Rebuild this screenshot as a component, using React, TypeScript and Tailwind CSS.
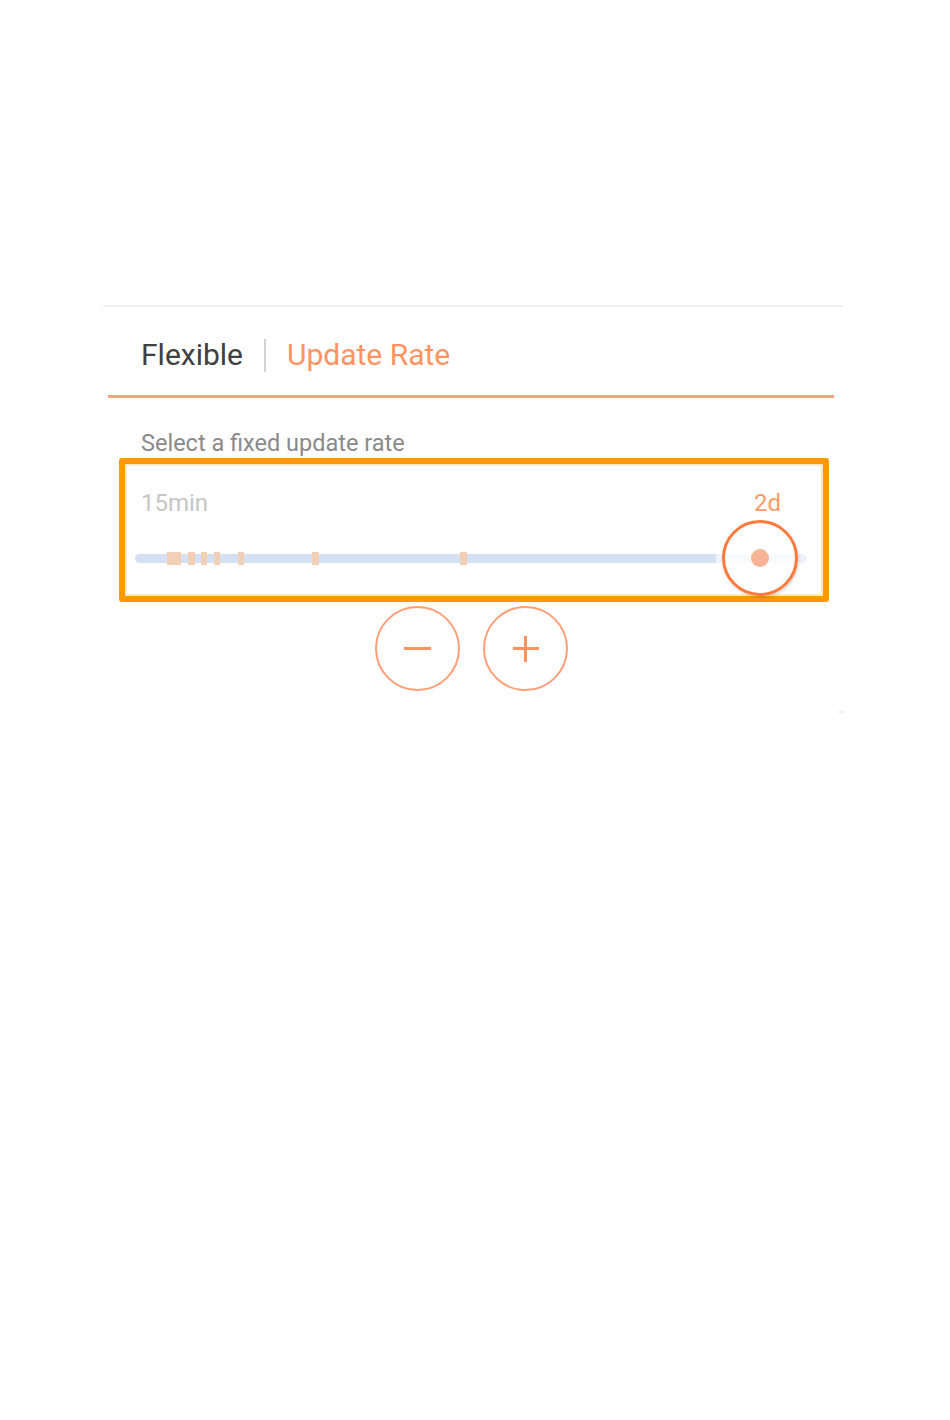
import React, { useState } from 'react'

const ticks = [
  { left: 32, width: 14 },
  { left: 53, width: 7 },
  { left: 66, width: 6 },
  { left: 79, width: 6 },
  { left: 103, width: 6 },
  { left: 177, width: 7 },
  { left: 325, width: 7 },
]

export default function App() {
  const [tab] = useState('rate')

  return (
    <div className="min-h-screen bg-white pt-[305px] font-['Roboto',_sans-serif]">
      <div className="relative ml-[103px] w-[740px] border-t-2 border-[#f0f0f0] pb-[22px]">
        <div className="mx-[5px] mr-[9px] flex items-center border-b-[3px] border-[#fba27e] pb-[22px] pl-[33px] pt-[30px]">
          <span className="text-[30px] leading-[36px] text-[#404040]">Flexible</span>
          <span className="mx-[21px] h-[33px] w-[2px] bg-[#d4d4d4]" />
          <span className={tab === 'rate' ? 'text-[30px] leading-[36px] text-[#ff9462]' : 'text-[30px] leading-[36px] text-[#404040]'}>
            Update Rate
          </span>
        </div>

        <p className="ml-[38px] mt-[31px] text-[23.5px] leading-[28px] text-[#8a8a8a]">Select a fixed update rate</p>

        <div className="ml-[16px] mr-[14px] mt-[1px] h-[144px] rounded-[3px] border-[6px] border-[#ff9900] shadow-[inset_0_0_0_2px_#ffe9cc]">
          <div className="flex justify-between pl-[16px] pr-[42px] pt-[25px] text-[24px] leading-[28px]">
            <span className="text-[#c6c6c6]">15min</span>
            <span className="text-[#ff9a66]">2d</span>
          </div>
          <div className="relative ml-[10px] mr-[17px] mt-[37px] h-[9px] rounded-full bg-[#d6e0f3]">
            {ticks.map((t, i) => (
              <span
                key={i}
                className="absolute top-[-2px] h-[13px] bg-[#f2cfb7]"
                style={{ left: t.left, width: t.width }}
              />
            ))}
            <span className="absolute right-0 top-0 h-[9px] w-[90px] rounded-r-full bg-[#eef2fa]" />
            <span className="absolute left-[587px] top-[-34px] flex h-[76px] w-[76px] items-center justify-center rounded-full border-[3px] border-[#ff7a3d] bg-white/60 shadow-[1px_2px_3px_rgba(0,0,0,0.15)]">
              <span className="h-[18px] w-[18px] rounded-full bg-[#f7b496]" />
            </span>
          </div>
        </div>

        <div className="mt-[4px] flex justify-center gap-[23px] pr-[3px]">
          <button className="flex h-[85px] w-[85px] items-center justify-center rounded-full border-2 border-[#ff9f78] bg-white">
            <span className="h-[3px] w-[27px] bg-[#ff935f]" />
          </button>
          <button className="relative flex h-[85px] w-[85px] items-center justify-center rounded-full border-2 border-[#ff9f78] bg-white">
            <span className="h-[3px] w-[26px] bg-[#ff935f]" />
            <span className="absolute h-[26px] w-[3px] bg-[#ff935f]" />
          </button>
        </div>
        <span className="absolute bottom-0 right-0 h-[2px] w-[4px] bg-[#eeeeee]" />
      </div>
    </div>
  )
}
